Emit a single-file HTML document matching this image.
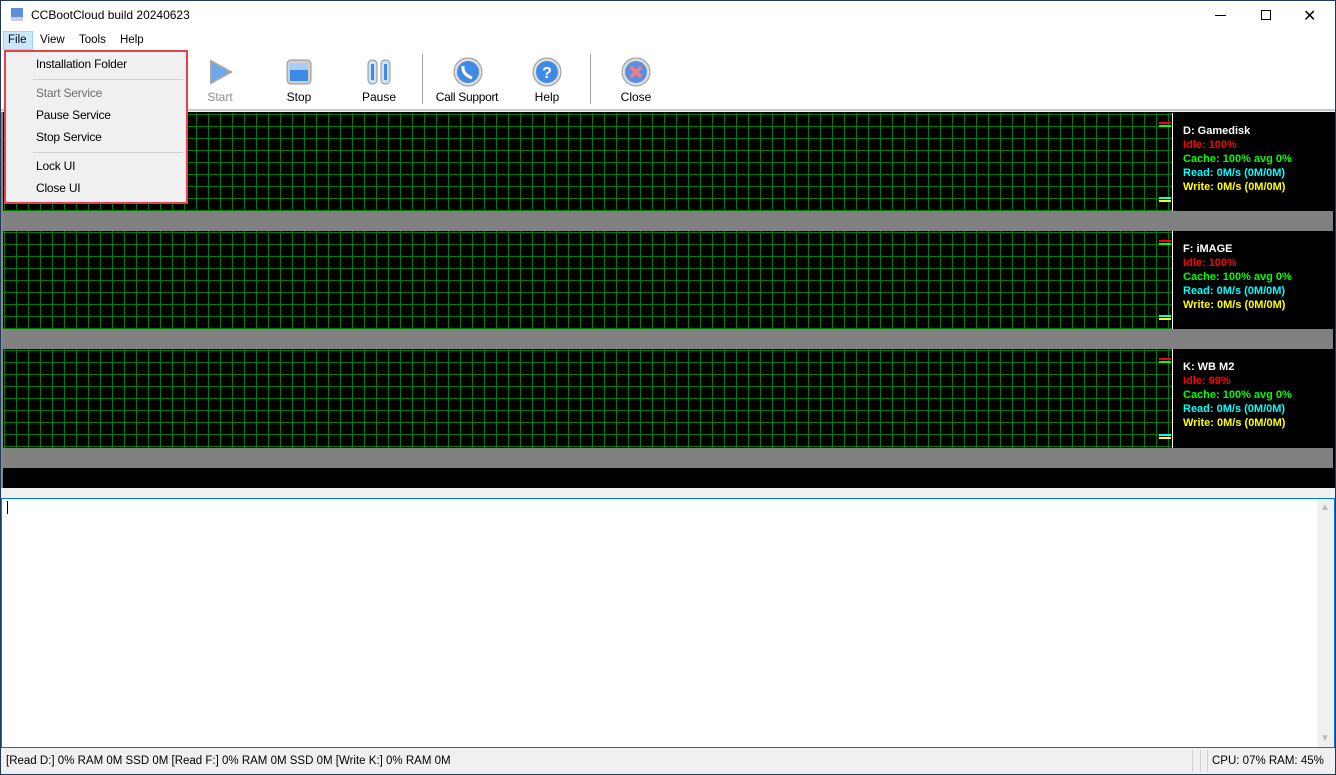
<!DOCTYPE html>
<html><head><meta charset="utf-8"><style>
*{margin:0;padding:0;box-sizing:border-box}
body{width:1336px;height:775px;overflow:hidden;background:#f0f0f0;font-family:"Liberation Sans",Arial,sans-serif;font-size:11.5px;position:relative;color:#000}
.abs{position:absolute;white-space:nowrap}
.grid{position:absolute;left:3px;width:1169px;background-color:#000;
background-image:linear-gradient(90deg,#007a00 1px,transparent 1px),linear-gradient(#007a00 1px,transparent 1px);
background-size:12px 12px;background-position:1px 1px}
.info{position:absolute;left:1173px;width:160px;background:#000;font-weight:bold;font-size:11px;line-height:14px;padding:10px 0 0 10px;white-space:nowrap}
.vl{position:absolute;left:1172px;width:1px;background:#fff}
.gray{position:absolute;left:3px;width:1330px;height:20px;background:#808080}
.mk{position:absolute;left:1159px;width:12px;height:2px}
.tb{position:absolute;top:90px;text-align:center;width:90px;font-size:12px;white-space:nowrap}
.mi{position:absolute;left:36px;font-size:12px;white-space:nowrap;letter-spacing:-0.2px}
</style></head><body>
<div class="abs" style="left:0;top:0;width:1336px;height:775px;border:1px solid #1f3a5c;pointer-events:none;z-index:10"></div>
<div class="abs" style="left:0;top:0;width:1336px;height:31px;background:#fff"></div>
<svg class="abs" style="left:9px;top:7px" width="16" height="16"><rect x="2" y="1" width="12" height="13" fill="#5b8fd8"/><rect x="2" y="10" width="12" height="4" fill="#ccd"/></svg>
<div class="abs" style="left:31px;top:8px;font-size:12px">CCBootCloud build 20240623</div>
<div class="abs" style="left:1215px;top:15px;width:11px;height:1px;background:#000"></div>
<div class="abs" style="left:1261px;top:10px;width:10px;height:10px;border:1px solid #000"></div>
<div class="abs" style="left:1303px;top:6px;font-size:16px">✕</div>
<div class="abs" style="left:0;top:31px;width:1336px;height:19px;background:#fff"></div>
<div class="abs" style="left:3px;top:31px;width:30px;height:19px;background:#cce8ff;border:1px solid #99d1ff"></div>
<div class="abs" style="left:8px;top:34px">File</div>
<div class="abs" style="left:40px;top:34px">View</div>
<div class="abs" style="left:79px;top:34px">Tools</div>
<div class="abs" style="left:120px;top:34px">Help</div>
<div class="abs" style="left:0;top:50px;width:1336px;height:61px;background:#fff;border-bottom:2px solid #c8c8c8"></div>
<svg class="abs" style="left:207px;top:58px" width="26" height="28"><path d="M4 3 L24 14 L4 25 Z" fill="#6aa8ec" stroke="#a8a8a8" stroke-width="2"/></svg>
<div class="tb" style="left:175px;color:#8d8d8d">Start</div>
<svg class="abs" style="left:286px;top:59px" width="26" height="26"><rect x="1" y="1" width="24" height="24" rx="4" fill="#d0d0d0" stroke="#909090"/><rect x="4" y="4" width="18" height="18" fill="#3d8be6"/><rect x="4" y="4" width="18" height="7" fill="#a9cdf7"/></svg>
<div class="tb" style="left:254px">Stop</div>
<svg class="abs" style="left:367px;top:59px" width="24" height="26"><rect x="1" y="1" width="9" height="24" rx="4" fill="#cfe3f8" stroke="#909090"/><rect x="14" y="1" width="9" height="24" rx="4" fill="#cfe3f8" stroke="#909090"/><rect x="4" y="5" width="3" height="16" fill="#3d8be6"/><rect x="17" y="5" width="3" height="16" fill="#3d8be6"/></svg>
<div class="tb" style="left:334px">Pause</div>
<div class="abs" style="left:422px;top:54px;width:1px;height:50px;background:#a0a0a0"></div>
<svg class="abs" style="left:453px;top:57px" width="30" height="30"><circle cx="15" cy="15" r="14" fill="#ddd" stroke="#999"/><circle cx="15" cy="15" r="11" fill="#3d8be6"/><path d="M10 9 Q9 17 19 21" stroke="#fff" stroke-width="3" fill="none"/></svg>
<div class="tb" style="left:422px;letter-spacing:-0.3px">Call Support</div>
<svg class="abs" style="left:532px;top:57px" width="30" height="30"><circle cx="15" cy="15" r="14" fill="#ddd" stroke="#999"/><circle cx="15" cy="15" r="11" fill="#3d8be6"/><text x="15" y="21" font-size="16" font-weight="bold" fill="#fff" text-anchor="middle" font-family="Liberation Sans">?</text></svg>
<div class="tb" style="left:502px">Help</div>
<div class="abs" style="left:590px;top:54px;width:1px;height:50px;background:#a0a0a0"></div>
<svg class="abs" style="left:621px;top:57px" width="30" height="30"><circle cx="15" cy="15" r="14" fill="#ddd" stroke="#999"/><circle cx="15" cy="15" r="11" fill="#5a8ee0"/><path d="M10 10 L20 20 M20 10 L10 20" stroke="#f08080" stroke-width="3.5"/></svg>
<div class="tb" style="left:591px">Close</div>
<div class="abs" style="left:1px;top:112px;width:1334px;height:376px;background:#000;border-left:2px solid #888"></div>
<div class="grid" style="top:113px;height:98px"></div>
<div class="vl" style="top:113px;height:98px"></div>
<div class="info" style="top:113px;height:98px;padding-top:11px"><div style="color:#fff">D: Gamedisk</div><div style="color:#f00">Idle: 100%</div><div style="color:#0f0">Cache: 100% avg 0%</div><div style="color:#0ff">Read: 0M/s (0M/0M)</div><div style="color:#ff0">Write: 0M/s (0M/0M)</div></div>
<div class="mk" style="top:122px;background:#f00"></div><div class="mk" style="top:125px;background:#0f0"></div><div class="mk" style="top:197px;background:#0ff"></div><div class="mk" style="top:200px;background:#ff0"></div>
<div class="gray" style="top:211px"></div>
<div class="grid" style="top:231px;height:98px"></div>
<div class="vl" style="top:231px;height:98px"></div>
<div class="info" style="top:231px;height:98px;padding-top:11px"><div style="color:#fff">F: iMAGE</div><div style="color:#f00">Idle: 100%</div><div style="color:#0f0">Cache: 100% avg 0%</div><div style="color:#0ff">Read: 0M/s (0M/0M)</div><div style="color:#ff0">Write: 0M/s (0M/0M)</div></div>
<div class="mk" style="top:240px;background:#f00"></div><div class="mk" style="top:243px;background:#0f0"></div><div class="mk" style="top:315px;background:#0ff"></div><div class="mk" style="top:318px;background:#ff0"></div>
<div class="gray" style="top:329px"></div>
<div class="grid" style="top:349px;height:99px"></div>
<div class="vl" style="top:349px;height:99px"></div>
<div class="info" style="top:349px;height:99px;padding-top:11px"><div style="color:#fff">K: WB M2</div><div style="color:#f00">Idle: 99%</div><div style="color:#0f0">Cache: 100% avg 0%</div><div style="color:#0ff">Read: 0M/s (0M/0M)</div><div style="color:#ff0">Write: 0M/s (0M/0M)</div></div>
<div class="mk" style="top:358px;background:#f00"></div><div class="mk" style="top:361px;background:#0f0"></div><div class="mk" style="top:434px;background:#0ff"></div><div class="mk" style="top:437px;background:#ff0"></div>
<div class="gray" style="top:448px"></div>
<div class="abs" style="left:0;top:488px;width:1336px;height:10px;background:#f0f0f0"></div>
<div class="abs" style="left:1px;top:498px;width:1334px;height:250px;background:#fff;border:1px solid #0078d7"></div>
<div class="abs" style="left:7px;top:501px;width:1px;height:13px;background:#000"></div>
<div class="abs" style="left:1317px;top:499px;width:17px;height:248px;background:#f0f0f0"></div>
<div class="abs" style="left:1320px;top:502px;font-size:10px;color:#bbb">▲</div>
<div class="abs" style="left:1320px;top:733px;font-size:10px;color:#bbb">▼</div>
<div class="abs" style="left:6px;top:755px;font-size:11.5px">[Read D:] 0% RAM 0M SSD 0M [Read F:] 0% RAM 0M SSD 0M [Write K:] 0% RAM 0M</div>
<div class="abs" style="left:1192px;top:750px;width:1px;height:22px;background:#d0d0d0"></div>
<div class="abs" style="left:1200px;top:750px;width:1px;height:22px;background:#d0d0d0"></div>
<div class="abs" style="left:1207px;top:750px;width:1px;height:22px;background:#d0d0d0"></div>
<div class="abs" style="left:1212px;top:755px;font-size:11.5px">CPU: 07% RAM: 45%</div>
<div class="abs" style="left:4px;top:50px;width:184px;height:154px;background:#f0f0f0;border:2px solid #e84049;z-index:5">
<div class="abs" style="left:27px;top:27px;width:150px;height:1px;background:#d0d0d0"></div>
<div class="abs" style="left:27px;top:100px;width:150px;height:1px;background:#d0d0d0"></div>
</div>
<div style="z-index:6;position:absolute;left:0;top:0;width:1px;height:1px">
<div class="mi" style="top:57px">Installation Folder</div>
<div class="mi" style="top:86px;color:#6d6d6d">Start Service</div>
<div class="mi" style="top:108px">Pause Service</div>
<div class="mi" style="top:130px">Stop Service</div>
<div class="mi" style="top:159px">Lock UI</div>
<div class="mi" style="top:181px">Close UI</div>
</div>
</body></html>
